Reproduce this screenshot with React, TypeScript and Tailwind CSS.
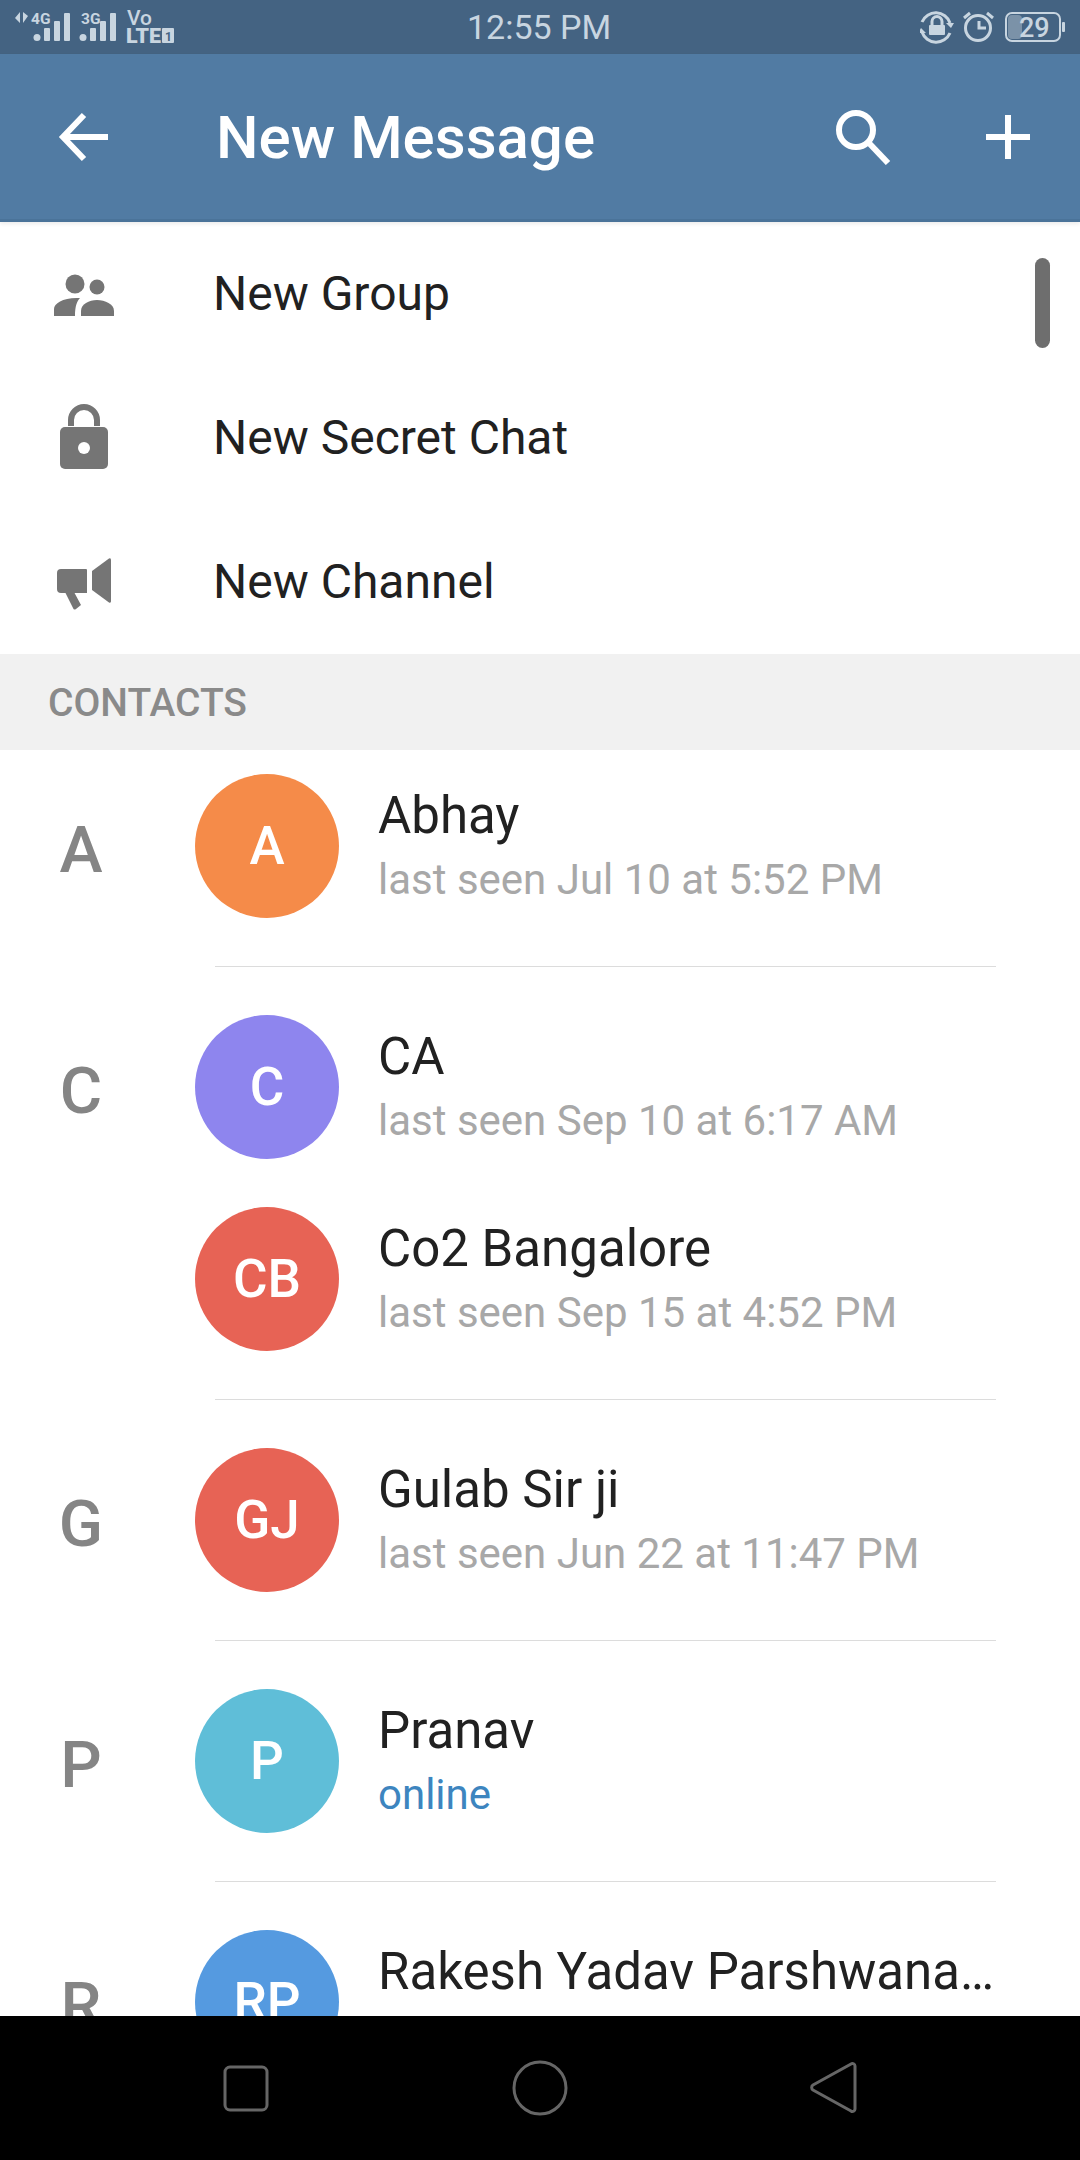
const FONT = "font-['Roboto',sans-serif]";

function SignalBars({ x }: { x: number }) {
  return (
    <g fill="#c8d5e0">
      <circle cx={x + 3} cy={37.5} r={3.5} />
      <rect x={x + 10} y={28} width={6} height={13} rx={1} />
      <rect x={x + 20} y={21} width={6} height={20} rx={1} />
      <rect x={x + 30} y={13} width={6} height={28} rx={1} />
    </g>
  );
}

function StatusLeft() {
  return (
    <svg width="180" height="54" viewBox="0 0 180 54" className="shrink-0">
      <g fill="#c8d5e0">
        <path d="M20 12v11l-5-5z M23 12v11l5-7z" />
        <text x="31" y="24" fontSize="15.500" fontWeight="700" fontFamily="Roboto">4G</text>
        <text x="81" y="24" fontSize="15.500" fontWeight="700" fontFamily="Roboto">3G</text>
        <text x="127" y="25" fontSize="21" fontWeight="500" fontFamily="Roboto">Vo</text>
        <text x="126" y="43" fontSize="21" fontWeight="900" fontFamily="Roboto" textLength="35" lengthAdjust="spacingAndGlyphs">LTE</text>
        <rect x="162" y="28" width="12" height="15" rx="1" />
      </g>
      <SignalBars x={34} />
      <SignalBars x={80} />
      <text x="165" y="41" fontSize="12" fontWeight="700" fontFamily="Roboto" fill="#446382">1</text>
    </svg>
  );
}

function StatusRight() {
  return (
    <svg width="160" height="54" viewBox="920 0 160 54" className="ml-auto shrink-0">
      <g fill="none" stroke="#c8d5e0" strokeWidth="3">
        <path d="M950 23a15 15 0 0 0-28-1" />
        <path d="M922 32a15 15 0 0 0 28 1" />
        <path d="M932 25v-3.500a5 5 0 0 1 10 0V25" />
        <circle cx="978" cy="28" r="12.500" />
        <path d="M979 21v7h7" />
        <path d="M964 18l6-5 M993 18l-6-5" />
      </g>
      <path d="M951 28l-5-5h8z M921 28l5 5h-8z" fill="#c8d5e0" />
      <rect x="929" y="25" width="16" height="10" rx="1" fill="#c8d5e0" />
      <rect x="1008" y="15" width="14" height="24" rx="4" fill="#7b92a8" />
      <rect x="1006" y="13" width="54" height="28" rx="6" fill="none" stroke="#c8d5e0" strokeWidth="2" />
      <rect x="1062" y="22" width="3" height="10" rx="1" fill="#c8d5e0" />
      <text x="1019" y="37" fontSize="27" fontWeight="500" fontFamily="Roboto" fill="#c8d5e0">29</text>
    </svg>
  );
}

function Row({ label, icon }: { label: string; icon: React.ReactNode }) {
  return (
    <div className="flex h-[144px] items-center">
      <div className="flex w-[213px] shrink-0 pl-[44px]">{icon}</div>
      <span className="-mt-[1px] text-[48px] leading-none text-[#212121]">{label}</span>
    </div>
  );
}

const GroupIcon = (
  <svg width="80" height="80" viewBox="44 253 80 80" fill="#757575">
    <circle cx="75" cy="283" r="9.500" />
    <circle cx="97" cy="286" r="7.500" />
    <path d="M54 315v-7c0-6 10-12 26-11-3 3-5 8-5 18z" />
    <path d="M81 315v-5c0-7 8-11 16-11s17 4 17 11v5z" />
  </svg>
);

const LockIcon = (
  <svg width="80" height="80" viewBox="44 397 80 80">
    <path d="M71 425v-6a13 13 0 0 1 26 0v6" fill="none" stroke="#757575" strokeWidth="6" />
    <rect x="60" y="426" width="48" height="42" rx="5" fill="#757575" />
    <circle cx="84" cy="447" r="6" fill="#fff" />
  </svg>
);

const MegaIcon = (
  <svg width="80" height="80" viewBox="44 541 80 80" fill="#757575">
    <path d="M61 568h25a1 1 0 0 1 1 1v23H61a4 4 0 0 1-4-4v-16a4 4 0 0 1 4-4z" />
    <path d="M92 570l17-12.500a1.500 1.500 0 0 1 2 1v42a1.500 1.500 0 0 1-2 1l-17-12.500z" />
    <path d="M65 591h9l7 13-5 4a2 2 0 0 1-3-1z" />
  </svg>
);

type Contact = { initials: string; color: string; name: string; status: string; online?: boolean };

function ContactRow({ c, letter }: { c: Contact; letter?: string }) {
  return (
    <div className="flex h-[192px] items-center">
      <div className="w-[195px] shrink-0 pr-[33px] pt-[8px] text-center text-[65px] font-medium leading-none text-[#858585]">
        {letter}
      </div>
      <div
        className="flex h-[144px] w-[144px] shrink-0 items-center justify-center rounded-full text-[53px] font-medium leading-none text-white"
        style={{ backgroundColor: c.color }}
      >
        {c.initials}
      </div>
      <div className="ml-[39px] flex w-[617px] min-w-0 flex-col pt-[4px]">
        <span className="truncate text-[51px] leading-[60px] text-[#212121]">{c.name}</span>
        <span className={`mt-[4px] truncate text-[42px] leading-[60px] ${c.online ? "text-[#3d85bf]" : "text-[#a8a8a8]"}`}>
          {c.status}
        </span>
      </div>
    </div>
  );
}

const groups: { letter: string; contacts: Contact[] }[] = [
  { letter: "A", contacts: [{ initials: "A", color: "#f58b49", name: "Abhay", status: "last seen Jul 10 at 5:52 PM" }] },
  {
    letter: "C",
    contacts: [
      { initials: "C", color: "#8e85ee", name: "CA", status: "last seen Sep 10 at 6:17 AM" },
      { initials: "CB", color: "#e76355", name: "Co2 Bangalore", status: "last seen Sep 15 at 4:52 PM" },
    ],
  },
  { letter: "G", contacts: [{ initials: "GJ", color: "#e76355", name: "Gulab Sir ji", status: "last seen Jun 22 at 11:47 PM" }] },
  { letter: "P", contacts: [{ initials: "P", color: "#5fbed8", name: "Pranav", status: "online", online: true }] },
  { letter: "R", contacts: [{ initials: "RP", color: "#559ae0", name: "Rakesh Yadav Parshwanath Nagar", status: "last seen Aug 2 at 9:14 PM" }] },
];

export default function App() {
  return (
    <div className={`flex h-[2160px] w-[1080px] flex-col overflow-hidden bg-white ${FONT}`}>
      <div className="flex h-[54px] shrink-0 items-center bg-[#446382]">
        <StatusLeft />
        <span className="ml-[287px] text-[34px] leading-none text-[#c8d5e0]">12:55 PM</span>
        <StatusRight />
      </div>

      <header className="relative z-10 flex h-[168px] shrink-0 items-center border-b-[3px] border-[#4a7399] bg-[#517ba3] shadow-[0_2px_4px_rgba(0,0,0,0.08)]">
        <svg width="52" height="52" viewBox="0 0 52 52" className="ml-[58px] shrink-0" fill="none" stroke="#fff" strokeWidth="6">
          <path d="M50 26H6 M26 4L5 26l21 22" />
        </svg>
        <h1 className="ml-[106px] mt-[2px] flex-1 text-[60px] font-medium leading-none text-white">New Message</h1>
        <svg width="56" height="56" viewBox="0 0 56 56" className="mr-[95px] shrink-0" fill="none" stroke="#fff" strokeWidth="6">
          <circle cx="21" cy="21" r="17" />
          <path d="M33 33l20 21" />
        </svg>
        <svg width="44" height="44" viewBox="0 0 44 44" className="mr-[50px] shrink-0" fill="none" stroke="#fff" strokeWidth="6">
          <path d="M22 0v44 M0 22h44" />
        </svg>
      </header>

      <main className="relative min-h-0 flex-1 overflow-hidden">
        <div className="absolute right-[30px] top-[36px] h-[90px] w-[15px] rounded-full bg-[#6e6e6e]" />
        <Row label="New Group" icon={GroupIcon} />
        <Row label="New Secret Chat" icon={LockIcon} />
        <Row label="New Channel" icon={MegaIcon} />
        <div className="flex h-[96px] items-center bg-[#f1f1f1] pl-[48px] pt-[2px] text-[39px] font-medium leading-none text-[#8a8a8a]">
          CONTACTS
        </div>
        {groups.map((g) => (
          <section key={g.letter} className="pb-[24px]">
            {g.contacts.map((c, i) => (
              <ContactRow key={c.name} c={c} letter={i === 0 ? g.letter : undefined} />
            ))}
            <div className="ml-[215px] mr-[84px] mt-[24px] h-[1px] bg-[#dcdcdc]" />
          </section>
        ))}
      </main>

      <nav className="flex h-[144px] shrink-0 items-center bg-black">
        <svg width="1080" height="144" viewBox="0 2016 1080 144" fill="none" stroke="#666" strokeWidth="3">
          <rect x="225" y="2067" width="42" height="43" rx="5" />
          <circle cx="540" cy="2088" r="26" />
          <path d="M855 2066v43a2.500 2.500 0 0 1-4 2l-38-21a3 3 0 0 1 0-5l38-21a2.500 2.500 0 0 1 4 2z" />
        </svg>
      </nav>
    </div>
  );
}
